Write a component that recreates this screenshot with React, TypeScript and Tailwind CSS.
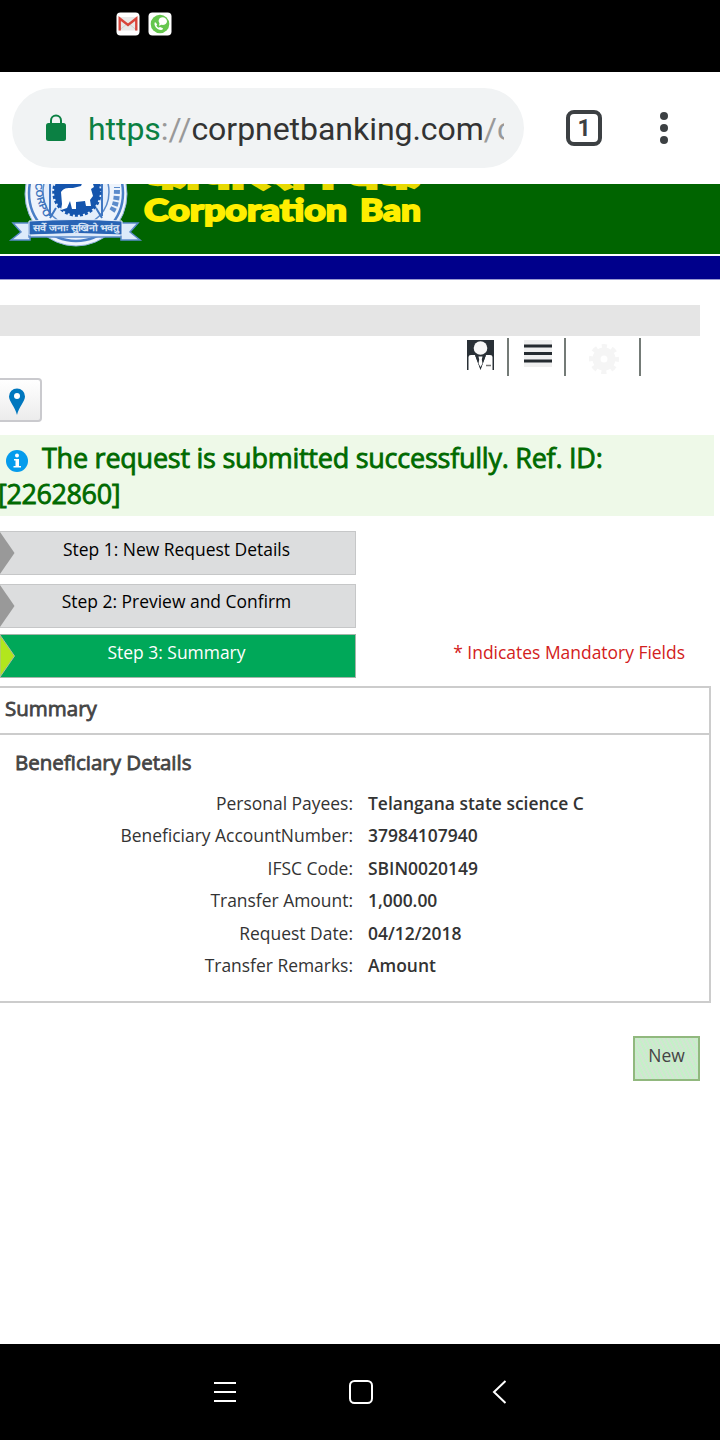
import React from "react";

const details: [string, string][] = [
  ["Personal Payees:", "Telangana state science C"],
  ["Beneficiary AccountNumber:", "37984107940"],
  ["IFSC Code:", "SBIN0020149"],
  ["Transfer Amount:", "1,000.00"],
  ["Request Date:", "04/12/2018"],
  ["Transfer Remarks:", "Amount"],
];

function StatusBar() {
  return (
    <header className="flex h-[72px] gap-2 bg-black pt-3 pl-[116px]">
      <svg width="24" height="24" viewBox="0 0 24 24">
        <rect x="0.5" y="0.5" width="23" height="23" rx="4" fill="#fff" />
        <rect x="3" y="5" width="18" height="13.5" rx="1" fill="#e8e8e8" />
        <path d="M3 18.500L12 11l9 7.500" fill="none" stroke="#d0d0d0" strokeWidth="1" />
        <path d="M3.700 18.500V6.500L12 13l8.300-6.500v12" fill="none" stroke="#d8453b" strokeWidth="2.400" />
      </svg>
      <svg width="24" height="24" viewBox="0 0 24 24">
        <rect x="0.5" y="0.5" width="23" height="23" rx="4" fill="#fff" />
        <circle cx="12" cy="12" r="9.300" fill="#65c64d" />
        <path d="M12 6c3-2 7 0 7 3.300 0 2.800-3 4-5.500 3.500l-2.500 1 .5-2.500c-1.500-2-1-4 .5-5.300z" fill="#fff" />
        <path d="M7 10c-2 3 2 8 6 8 2-.3 2.500-1.500 1.500-2l-2.500-1-1.500.7c-1-.5-2-1.500-2-2.500l.7-1z" fill="#fff" />
      </svg>
    </header>
  );
}

function BrowserBar() {
  return (
    <div className="flex h-28 items-center bg-white pl-3 font-['Roboto',sans-serif]">
      <div className="flex h-20 w-[512px] items-center rounded-full bg-[#f1f3f4] pl-[34px]">
        <svg width="20" height="28" viewBox="0 0 20 28" className="shrink-0">
          <path d="M5 10V6.500a5 5 0 0 1 10 0V10" fill="none" stroke="#0b8043" strokeWidth="2" />
          <rect x="0" y="9" width="20" height="18" rx="2.500" fill="#0b8043" />
        </svg>
        <div className="ml-[22px] w-[416px] overflow-hidden pt-0.5 text-[32px] leading-10 tracking-[-0.04px] whitespace-nowrap text-[#333]">
          <span className="text-[#0b8043]">https</span>
          <span className="text-[#999]">://</span>corpnetbanking.com<span className="text-[#999]">/c</span>
        </div>
      </div>
      <div className="ml-[42px] flex size-9 items-center justify-center rounded-lg border-4 border-[#3c4043] pt-0.5 text-[23px] font-bold text-[#3c4043]">
        1
      </div>
      <svg width="8" height="32" viewBox="0 0 8 32" className="ml-[58px]" fill="#3c4043">
        <circle cx="4" cy="4" r="4" />
        <circle cx="4" cy="16" r="4" />
        <circle cx="4" cy="28" r="4" />
      </svg>
    </div>
  );
}

function Banner() {
  return (
    <div className="h-24 bg-[#006400]">
      <svg width="720" height="70" viewBox="0 0 720 70" className="block">
        <ellipse cx="76" cy="10" rx="51" ry="52" fill="#eef4fc" stroke="#8eb0dd" strokeWidth="1" />
        <ellipse cx="76" cy="9" rx="47" ry="48" fill="none" stroke="#4a7fc6" strokeWidth="2.500" />
        <ellipse cx="76" cy="8" rx="33" ry="34" fill="#e4eefb" stroke="#5b8bcb" strokeWidth="1.500" />
        <path d="M50 0v32M102 0v32M56 24l-6 10M96 24l6 10" stroke="#3f77c2" strokeWidth="2" />
        <circle cx="77" cy="8" r="23" fill="#1555ad" stroke="#1555ad" strokeWidth="3.500" strokeDasharray="3 2" />
        <path d="M61 8c3-5 8-4 12-4l8-2 2-5 4 3 5-3 2 6-3 2 2 7-3 4 1 6h-5l-1-5-9 1v7h-4l-2-8-3 7-6 2 1-6z" fill="#fff" />
        <path id="ring" d="M35 -2c1 36 20 51 41 51s40-15 41-51" fill="none" />
        <text fontSize="10" fontWeight="bold" fill="#3c73bd" fontFamily="Liberation Sans, sans-serif">
          <textPath href="#ring" startOffset="1">CORPO</textPath>
        </text>
        <path d="M112 27c4-6 5-13 5-24" fill="none" stroke="#5b8bcb" strokeWidth="6" strokeDasharray="4 2" />
        <path d="M11 56l10-8-8-9h16v14h92V39h17l-8 9 10 8h-19V45H30v11z" fill="#dceafa" stroke="#5b8bcb" strokeWidth="1.500" />
        <path d="M29 37q48-3 93 0v14q-46-3-93 0z" fill="#2964b5" stroke="#e6effb" strokeWidth="1" />
        <text x="33" y="46.5" fontSize="9" fontWeight="bold" fill="#dce8f8" textLength="86" lengthAdjust="spacingAndGlyphs">
          सर्वे जनाः सुखिनो भवंतु
        </text>
        <g fill="#ffee00" stroke="#ffee00" fontWeight="900">
          <text x="145" y="3.500" fontSize="33" fill="#e8da00" stroke="#e8da00" strokeWidth="3" textLength="275" lengthAdjust="spacingAndGlyphs">
            कार्पोरेशन बैंक
          </text>
          <g fontFamily="Lato, sans-serif" fontSize="31" strokeWidth="1.8">
            <text x="144" y="37" textLength="203" lengthAdjust="spacingAndGlyphs">Corporation</text>
            <text x="360" y="37" textLength="61" lengthAdjust="spacingAndGlyphs">Ban</text>
          </g>
        </g>
      </svg>
      <div className="h-[26px] border-t-2 border-b border-t-white border-b-[#9999d0] bg-[#00008b]" />
    </div>
  );
}

function Toolbar() {
  return (
    <div className="flex h-[42px] items-start pt-0.5 pl-[467px]">
      <svg width="27" height="30" viewBox="0 0 27 30" className="mt-0.5">
        <path d="M0 0h27v30H0z" fill="#293036" />
        <circle cx="13.500" cy="8" r="6.800" fill="#f7f7f7" />
        <path d="M1.500 30V17q0-2 2.500-2l4 0 5.500 15z" fill="#fff" />
        <path d="M25.500 30V17q0-2-2.500-2l-4 0-5.500 15z" fill="#fff" />
        <path d="M8 15l5.500 14L19 15l-3 1.500h-5z" fill="#293036" />
        <path d="M11.500 16.500h4l-.7 3 .7 4-2 3.500-2-3.500.7-4z" fill="#fff" />
        <path d="M19 25.500h5" stroke="#777" strokeWidth="1.500" />
      </svg>
      <div className="ml-[13px] h-[38px] w-0.5 bg-[#747b77]" />
      <svg width="28" height="27" viewBox="0 0 28 27" className="mt-0.5 ml-[15px]">
        <path d="M0 0h28v27H0z" fill="#efefef" />
        <path d="M0 6h28M0 13.500h28M0 21h28" stroke="#252b30" strokeWidth="3" />
      </svg>
      <div className="ml-3 h-[38px] w-0.5 bg-[#747b77]" />
      <svg width="30" height="30" viewBox="0 0 30 30" className="mt-[6px] ml-[23px]">
        <circle cx="15" cy="15" r="7.500" fill="none" stroke="#f5f5f5" strokeWidth="8" />
        <circle cx="15" cy="15" r="12.500" fill="none" stroke="#f5f5f5" strokeWidth="5" strokeDasharray="5 4.817" strokeDashoffset="2.500" />
      </svg>
      <div className="ml-[20px] h-[38px] w-0.5 bg-[#747b77]" />
    </div>
  );
}

function Step({ label, active, className }: { label: string; active?: boolean; className: string }) {
  return (
    <div
      className={`flex w-[356px] border border-l-0 text-[17.45px] ${className} ${
        active ? "border-[#a5b5aa] bg-[#00a859] text-white" : "border-[#c6c7c8] bg-[#dcddde] text-black"
      }`}
    >
      <svg width="16" height="42" viewBox="0 0 16 42" className="shrink-0">
        <path d="M0 0l14.500 21L0 42z" fill={active ? "#b2e61d" : "#999"} stroke={active ? "#b0b8a8" : "none"} />
      </svg>
      <div className="grow pr-[18px] leading-[25px]  text-center">{label}</div>
    </div>
  );
}

export default function App() {
  return (
    <div className="flex h-[1440px] w-[720px] flex-col overflow-hidden bg-white font-['Open_Sans',sans-serif]">
      <StatusBar />
      <BrowserBar />
      <Banner />
      <main className="grow overflow-hidden">
        <div className="mt-[25px] h-[31px] w-[700px] bg-[#e5e5e5]" />
        <Toolbar />
        <div className="flex h-11 w-[42px] justify-center rounded-r border-2 border-l-0 border-[#cacace] bg-gradient-to-b from-white to-[#ececec] pt-2 pr-[7px]">
          <svg width="18" height="27" viewBox="0 0 18 27">
            <path d="M9 27C7 19 1 13 1 8.500a8 8 0 0 1 16 0C17 13 11 19 9 27z" fill="#0077be" />
            <circle cx="9" cy="8" r="3" fill="#fff" />
          </svg>
        </div>
        <div className="mt-[13px] h-[81px] w-[714px] bg-[#eef9e8] pt-[5px] text-[27px] leading-9 text-[#006a00] [-webkit-text-stroke:0.8px_#006a00]">
          <div className="flex items-center">
            <svg width="22" height="22" viewBox="0 0 22 22" className="mt-1.5 mr-[14px] ml-[6px]">
              <circle cx="11" cy="11" r="11" fill="#049cec" />
              <circle cx="11" cy="5.500" r="2" fill="#fff" />
              <path d="M8 9h5v7h2v1.500H7.500V16h2v-5.500H8z" fill="#fff" />
            </svg>
            <span className="tracking-[-0.25px]">The request is submitted successfully. Ref. ID:</span>
          </div>
          <div className="-ml-0.5 tracking-[-0.4px]">[2262860]</div>
        </div>
        <Step label="Step 1: New Request Details" className="mt-[15px] h-11 pt-[5px] [&>svg]:-mt-[5px]" />
        <Step label="Step 2: Preview and Confirm" className="mt-[9px] h-11 pt-1 [&>svg]:-mt-1" />
        <div className="mt-[6px] flex items-start justify-between pr-[35px]">
          <Step label="Step 3: Summary" active className="h-11 pt-[5px] [&>svg]:-mt-[5px]" />
          <span className="pt-[6px] text-[17.45px] leading-[25px] text-[#d32020]">* Indicates Mandatory Fields</span>
        </div>
        <section className="mt-2 h-[317px] w-[711px] border-2 border-l-0 border-[#ccc]">
          <h2 className="h-[47px] border-b-2 border-[#ccc] pt-1.5 pl-[5px] text-[20.5px] leading-7 font-normal text-[#444] [-webkit-text-stroke:0.8px_#444]">
            Summary
          </h2>
          <h3 className="pt-[13px] pl-[15px] text-[20.5px] leading-7 font-normal text-[#444] [-webkit-text-stroke:0.8px_#444]">
            Beneficiary Details
          </h3>
          <dl className="mt-[11px] grid grid-cols-[353px_1fr] gap-x-[15px] text-[17.45px] leading-[32.4px] text-[#333]">
            {details.map(([label, value]) => (
              <React.Fragment key={label}>
                <dt className="text-right">{label}</dt>
                <dd className="font-semibold">{value}</dd>
              </React.Fragment>
            ))}
          </dl>
        </section>
        <button className="mt-[33px] ml-[633px] block h-[45px] w-[67px] border-2 border-[#91b87e] bg-[#cdebcc] bg-[repeating-linear-gradient(65deg,#c5f0c8_0_2px,#d2e5d2_2px_4px)] pb-[6px] text-[17.45px] text-[#444]">
          New
        </button>
      </main>
      <nav className="flex h-24 shrink-0 bg-black">
        <svg width="720" height="96" viewBox="0 0 720 96" fill="none" stroke="#fff" strokeWidth="2">
          <path d="M214 39h22M214 48h22M214 57h22M505.500 37L494 48l11.500 11" />
          <rect x="350" y="37" width="22" height="22" rx="4.500" />
        </svg>
      </nav>
    </div>
  );
}
